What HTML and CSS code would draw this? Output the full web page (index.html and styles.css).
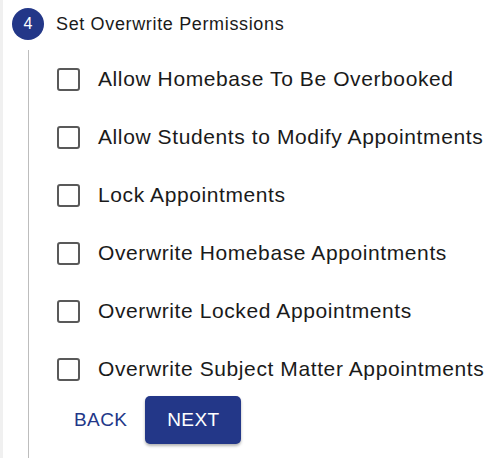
FILE: index.html
```html
<!DOCTYPE html>
<html lang="en">
<head>
    <meta charset="UTF-8">
    <meta name="viewport" content="width=device-width, initial-scale=1.0">
    <title>Set Overwrite Permissions</title>
    <link rel="stylesheet" href="styles.css">
</head>
<body>

<div class="stepper">
    <div class="step-head">
        <span class="step-icon">4</span>
        <span class="step-label">Set Overwrite Permissions</span>
    </div>
    <div class="step-body">
        <ul class="perm-list">
            <li><label class="perm"><span class="box"></span>Allow Homebase To Be Overbooked</label></li>
            <li><label class="perm"><span class="box"></span>Allow Students to Modify Appointments</label></li>
            <li><label class="perm"><span class="box"></span>Lock Appointments</label></li>
            <li><label class="perm"><span class="box"></span>Overwrite Homebase Appointments</label></li>
            <li><label class="perm"><span class="box"></span>Overwrite Locked Appointments</label></li>
            <li><label class="perm"><span class="box"></span>Overwrite Subject Matter Appointments</label></li>
        </ul>
        <div class="actions">
            <button class="btn-text">BACK</button>
            <button class="btn-main">NEXT</button>
        </div>
    </div>
</div>

</body>
</html>
```

FILE: styles.css
```css
body {
    margin: 0;
    font-family: "Liberation Sans", Arial, sans-serif;
    color: #1a1a1a;
    background: #fff;
    border-left: 3px solid #f0f0f0;
    height: 458px;
    overflow: hidden;
}
.stepper {
    padding-top: 8px;
}
.step-head {
    display: flex;
    align-items: center;
    gap: 12px;
    margin-left: 9px;
}
.step-icon {
    width: 32px;
    height: 32px;
    border-radius: 50%;
    background: #233788;
    color: #fff;
    font-size: 16px;
    display: flex;
    align-items: center;
    justify-content: center;
}
.step-label {
    font-size: 18px;
    letter-spacing: 0.65px;
}
.step-body {
    margin-left: 25px;
    margin-top: 10px;
    border-left: 1px solid #bdbdbd;
    padding-left: 28px;
    height: 420px;
}
.perm-list {
    list-style: none;
    margin: 0;
    padding: 0;
}
.perm-list li {
    height: 58px;
    display: flex;
    align-items: center;
}
.perm {
    display: flex;
    align-items: center;
    gap: 18px;
    font-size: 21px;
    letter-spacing: 0.6px;
    white-space: nowrap;
}
.box {
    width: 19px;
    height: 19px;
    border: 2.5px solid #595959;
    border-radius: 3px;
}
.actions {
    display: flex;
    align-items: center;
    gap: 18px;
    margin-top: -2px;
    margin-left: 17px;
}
button {
    font-family: "Liberation Sans", Arial, sans-serif;
    font-size: 19px;
    letter-spacing: 0.4px;
    border: none;
    cursor: pointer;
}
.btn-text {
    background: none;
    color: #233788;
    padding: 0;
}
.btn-main {
    background: #233788;
    color: #fff;
    width: 96px;
    height: 48px;
    border-radius: 5px;
    box-shadow: 0 2px 3px rgba(0, 0, 0, 0.3);
}
```
